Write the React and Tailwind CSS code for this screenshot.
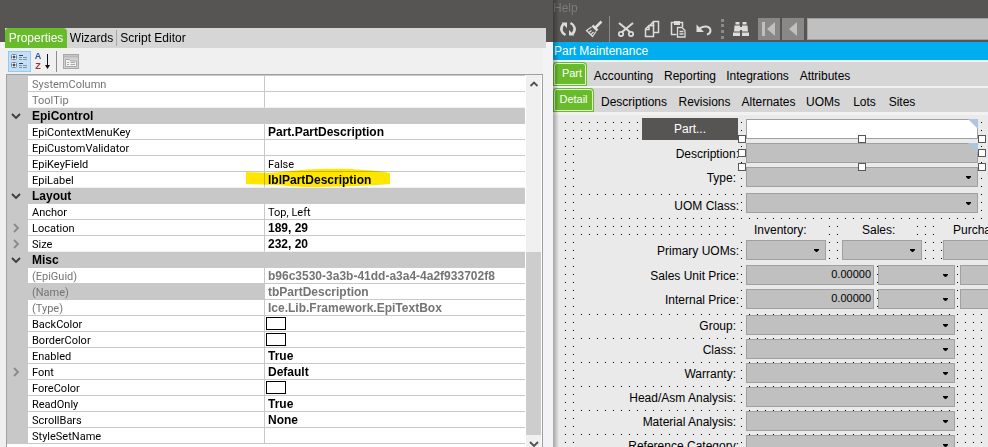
import React from "react";

const PROPERTY_ROWS = [
  { name: "SystemColumn", value: "", muted: true },
  { name: "ToolTip", value: "", muted: true },
  { category: "EpiControl" },
  { name: "EpiContextMenuKey", value: "Part.PartDescription", bold: true },
  { name: "EpiCustomValidator", value: "" },
  { name: "EpiKeyField", value: "False" },
  { name: "EpiLabel", value: "lblPartDescription", bold: true, marked: true },
  { category: "Layout" },
  { name: "Anchor", value: "Top, Left" },
  { name: "Location", value: "189, 29", bold: true, expandable: true },
  { name: "Size", value: "232, 20", bold: true, expandable: true },
  { category: "Misc" },
  { name: "(EpiGuid)", value: "b96c3530-3a3b-41dd-a3a4-4a2f933702f8", bold: true, muted: true },
  { name: "(Name)", value: "tbPartDescription", bold: true, muted: true, selected: true },
  { name: "(Type)", value: "Ice.Lib.Framework.EpiTextBox", bold: true, muted: true },
  { name: "BackColor", swatch: true },
  { name: "BorderColor", swatch: true },
  { name: "Enabled", value: "True", bold: true },
  { name: "Font", value: "Default", bold: true, expandable: true },
  { name: "ForeColor", swatch: true },
  { name: "ReadOnly", value: "True", bold: true },
  { name: "ScrollBars", value: "None", bold: true },
  { name: "StyleSetName", value: "" },
];

function Chevron({ className, d }) {
  return (
    <svg className={className} width="10" height="10" viewBox="0 0 10 10" fill="none" stroke="currentColor" strokeWidth="1.800">
      <path d={d} />
    </svg>
  );
}

const DOWN = "M1 3l4 4 4-4";
const RIGHT = "M3 1l4 4-4 4";
const UP = "M1.500 7L5 3.500 8.500 7";

function PropertyRow({ row, beforeCategory }) {
  if (row.category) {
    return (
      <tr className="h-4 bg-[#c8c8c8]">
        <td className="p-0">
          <Chevron className="ml-1 text-[#3c3c3c]" d={DOWN} />
        </td>
        <th colSpan={2} scope="colgroup" className="p-0 pl-1 text-left text-xs leading-4 font-bold font-['Liberation_Sans',sans-serif]">
          {row.category}
        </th>
      </tr>
    );
  }
  const line = beforeCategory ? "border-b border-[#f0f0f0]" : "border-b border-[#c8c8c8]";
  const tone = row.muted ? "text-[#747474]" : "text-black";
  const valueFont = row.bold ? "text-xs leading-[13px] font-bold font-['Liberation_Sans',sans-serif]" : "leading-[13px]";
  return (
    <tr className="h-4">
      <td className="bg-[#c8c8c8] p-0">
        {row.expandable && <Chevron className="ml-1 text-[#8a8a8a]" d={RIGHT} />}
      </td>
      <th scope="row" className={`${line} ${tone} ${row.selected ? "bg-[#c8c8c8]" : "bg-white"} p-0 pt-0.5 pl-1 text-left font-normal leading-[13px]`}>
        {row.name}
      </th>
      <td className={`${line} ${tone} relative border-l border-l-[#c8c8c8] p-0`}>
        {row.marked && (
          <svg className="absolute -top-1 -left-5 mix-blend-multiply" width="146" height="20" viewBox="0 0 146 20" fill="#ffe600">
            <path d="M1 4L24 5C40 4 58 1 76 1C100 0 128 2 145 5V16C122 18 90 19 64 19C50 19 44 18 32 17L1 16Z" />
          </svg>
        )}
        {row.swatch ? (
          <span className="ml-px block h-[13px] w-5 border border-black bg-white" />
        ) : (
          <span className={`relative block h-[15px] pt-0.5 pl-[3px] whitespace-nowrap ${valueFont}`}>{row.value}</span>
        )}
      </td>
    </tr>
  );
}

function PropertiesPanel() {
  return (
    <section className="flex w-[553px] shrink-0 flex-col bg-[#f3f3f6]">
      <div className="h-7 bg-[#575553]" />
      <div className="flex bg-[linear-gradient(#575553_14px,#f3f3f6_0)] pr-[7px] pl-[5px]">
        <nav className="flex h-5 flex-1 bg-[#d6d6d6] text-xs">
          <button className="w-[62px] rounded-t-sm bg-[#68bb2a] text-white">Properties</button>
          <button className="my-0.5 w-[50px] border-r border-[#a8a8a0]">Wizards</button>
          <button className="w-[72px]">Script Editor</button>
        </nav>
      </div>
      <div className="mr-2.5 flex h-[26px] items-center bg-[#f0f0f0] pl-2">
        <button aria-label="Categorized" className="flex h-[21px] w-[23px] items-center justify-center border border-[#90c8f6] bg-[#c5dff5]">
          <svg width="17" height="16" viewBox="0 0 17 16" fill="none">
            <rect x="0.5" y="1.5" width="5" height="5" rx="1" fill="#fff" stroke="#6f86a5" />
            <rect x="0.5" y="9.5" width="5" height="5" rx="1" fill="#fff" stroke="#6f86a5" />
            <path d="M1.500 4h3M3 2.500v3M1.500 12h3M3 10.500v3" stroke="#111" />
            <path d="M8 2.500h4M8 10.500h4" stroke="#333f55" />
            <path d="M8 4.500h3M12 4.500h4M8 6.500h3M12 6.500h4M8 12.500h3M12 12.500h4M8 14.500h3M12 14.500h4" stroke="#7d93ae" />
          </svg>
        </button>
        <button aria-label="Alphabetical" className="ml-[3px] flex h-[21px] w-[18px] items-center">
          <span className="flex w-2 flex-col font-['Liberation_Sans',sans-serif] text-[9px] leading-[10px] font-bold">
            <span className="text-[#2b579a]">A</span>
            <span className="text-[#a13237]">Z</span>
          </span>
          <svg className="ml-0.5" width="7" height="17" viewBox="0 0 7 17" fill="#111">
            <path d="M3 1h1v11h2L3.500 16 1 12h2z" />
          </svg>
        </button>
        <span className="ml-1 h-[21px] w-px bg-[#8c8c8c]" />
        <button aria-label="Property pages" className="ml-1.5">
          <svg width="16" height="15" viewBox="0 0 16 15" fill="none" stroke="#a8a8a8">
            <rect x="0.5" y="0.5" width="15" height="14" fill="#d2d2d2" />
            <path d="M1 2.500h14" strokeWidth="2" stroke="#b9b9b9" />
            <path d="M2.500 12.500v-7h4l1 1.500h6v5.500z" fill="#f4f4f4" />
            <path d="M4 8.500h2M7.500 8.500h4.500M4 10.500h2M7.500 10.500h4.500" />
          </svg>
        </button>
      </div>
      <div className="mr-2.5 flex min-h-0 flex-1 bg-[#f0f0f0] pl-1.5">
        <div className="flex min-w-0 flex-1 overflow-hidden border-t border-r border-l border-[#a0a0a0] bg-white">
          <div className="min-w-0 flex-1">
            <table className="w-full table-fixed border-separate border-spacing-0 border-t border-[#c8c8c8] font-['Roboto',sans-serif] text-[11px]">
              <colgroup>
                <col className="w-[21px]" />
                <col className="w-[236px]" />
                <col />
              </colgroup>
              <tbody>
                {PROPERTY_ROWS.map((row, i) => (
                  <PropertyRow
                    key={row.category || row.name}
                    row={row}
                    beforeCategory={Boolean(PROPERTY_ROWS[i + 1]?.category)}
                  />
                ))}
              </tbody>
            </table>
          </div>
          <div className="ml-px mr-px flex w-[15px] flex-col items-center bg-[#f0f0f0] text-[#505050]">
            <Chevron className="my-1" d={UP} />
            <div className="mt-[159px] w-full flex-1 bg-[#cdcdcd]" />
            <Chevron className="mt-1 -mb-0.5" d={DOWN} />
          </div>
        </div>
      </div>
    </section>
  );
}

function ToolButton({ label, children }) {
  return (
    <button aria-label={label} className="flex h-6 w-[26px] shrink-0 items-center justify-center text-[#dcdcdc]">
      <svg width="18" height="18" viewBox="0 0 18 18" fill="none" stroke="currentColor" strokeWidth="1.500">
        {children}
      </svg>
    </button>
  );
}

function AppToolbar() {
  return (
    <header className="h-[42px] overflow-hidden bg-[#575553]">
      <button className="block h-4 text-xs leading-[13px] text-[#7b7b7b]">Help</button>
      <div className="flex h-[26px] items-center pl-0.5">
        <ToolButton label="Refresh">
          <path d="M6.500 15C2.500 13 .5 8.500 4.500 4M11.500 3C15.500 5 17.500 9.500 13.500 14" strokeWidth="2.500" />
          <path d="M2.500 2.500H8V8zM15.500 15.500H10V10z" fill="currentColor" stroke="none" />
        </ToolButton>
        <ToolButton label="Clear">
          <path d="M16.500 1.500L10.500 7.500" strokeWidth="2.500" />
          <path d="M7.500 5.500l5 5" strokeWidth="2.500" />
          <path d="M6.500 7L1.500 10.500l6 6L11 11.500M4 12.500l2.500-2M6 14.500l2.500-2.500" strokeWidth="1.300" />
        </ToolButton>
        <span className="ml-0.5 mr-[3px] h-[26px] w-px shrink-0 bg-[#8a8a8a]" />
        <ToolButton label="Cut">
          <path d="M2 3l11 9M16 3L5 12" strokeWidth="2" />
          <circle cx="4" cy="14" r="2.200" strokeWidth="1.700" />
          <circle cx="14" cy="14" r="2.200" strokeWidth="1.700" />
        </ToolButton>
        <ToolButton label="Copy">
          <path d="M7 5.500L10.500 1.500H15.500V12.500H11M10.500 1.500V5.500H7" />
          <path d="M2.500 9L6 5.500H10.500V16.500H2.500zM6 5.500V9.500H2.500" />
        </ToolButton>
        <ToolButton label="Paste">
          <path d="M7.500 14.500H2.500v-12h11V7" />
          <path d="M5 1h6v4H5z" fill="currentColor" stroke="none" />
          <path d="M8.500 7.500H13l3 3v6.500H8.500zM10.500 11.500h4M10.500 14h4" strokeWidth="1.300" />
        </ToolButton>
        <ToolButton label="Undo">
          <path d="M4 9C8 5.500 15 5.500 15.500 10.500C15.500 12.500 14 14 12 14.500" strokeWidth="2" />
          <path d="M1.500 4.500v7.500h7.500z" fill="currentColor" stroke="none" />
        </ToolButton>
        <span className="ml-1 mr-1 h-5 shrink-0 border-l-3 border-dotted border-[#8a8a8a]" />
        <ToolButton label="Search">
          <g fill="currentColor" stroke="none">
            <path d="M3.500 2h4v2.500h-4zM10.500 2h4v2.500h-4zM2.500 5.500h5.500v6H2zM10 5.500h5.500l.5 6h-6zM8 7h2v3H8zM1 12.500h7V16H1zM10 12.500h7V16h-7z" />
          </g>
        </ToolButton>
        <button aria-label="First record" className="ml-1 flex h-[22px] w-[22px] shrink-0 items-center justify-center bg-[#8a8787]">
          <svg width="14" height="14" viewBox="0 0 14 14" fill="#c0bfbf">
            <path d="M0 0h3v14H0zM13 0v14L5 7z" />
          </svg>
        </button>
        <button aria-label="Previous record" className="ml-0.5 flex h-[22px] w-[22px] shrink-0 items-center justify-center bg-[#8a8787]">
          <svg width="8" height="14" viewBox="0 0 8 14" fill="#c0bfbf">
            <path d="M8 0v14L0 7z" />
          </svg>
        </button>
        <input aria-label="Record" className="ml-[3px] h-[22px] min-w-0 flex-1 border border-r-0 border-[#a0a0a0] bg-[#c0c0c0]" />
      </div>
    </header>
  );
}

const ACTIVE_TAB = "h-6 rounded-t-sm bg-[#68bb2a] pb-0.5 text-[11px] text-white outline outline-1 -outline-offset-2 outline-[#e4f3d8]";

function Tabs() {
  return (
    <div className="bg-[#f2f2f2] pt-0.5 text-xs">
      <nav className="flex h-6 overflow-hidden bg-[#d6d6d6]">
        <button className={`${ACTIVE_TAB} w-[34px] pl-1`}>Part</button>
        <button className="ml-1 w-[65px] pt-1">Accounting</button>
        <button className="w-[68px] pt-1">Reporting</button>
        <button className="w-[67px] pt-1">Integrations</button>
        <button className="w-[68px] pt-1">Attributes</button>
      </nav>
      <nav className="mt-0.5 flex h-6 overflow-hidden bg-[#d6d6d6]">
        <button className={`${ACTIVE_TAB} w-[41px]`}>Detail</button>
        <button className="ml-0.5 w-[76px] pt-1">Descriptions</button>
        <button className="w-[65px] pt-1">Revisions</button>
        <button className="w-[63px] pt-1">Alternates</button>
        <button className="w-[46px] pt-1">UOMs</button>
        <button className="w-[37px] pt-1">Lots</button>
        <button className="w-[38px] pt-1">Sites</button>
      </nav>
    </div>
  );
}

function Combo({ id, label, className }) {
  return (
    <span className={`relative block h-5 shrink-0 ${className}`}>
      <select id={id} aria-label={label} className="block size-full appearance-none border border-[#a0a0a0] bg-[#c0c0c0]" />
      <svg className="pointer-events-none absolute top-2 right-[7px]" width="5" height="5" viewBox="0 0 5 5">
        <path d="M0 1h5v1L3 4H2L0 2z" />
      </svg>
    </span>
  );
}

const BOX = "block h-5 border border-[#a0a0a0] outline-none";

function Field({ label, id, className, labelClass, children }) {
  return (
    <div className={`flex pl-2.5 ${className}`}>
      <label htmlFor={id} className={`mr-[7px] w-[164px] shrink-0 bg-[#eaeaea] text-right whitespace-nowrap ${labelClass || "h-5 leading-[22px]"}`}>
        {label}
      </label>
      {children}
    </div>
  );
}

function FilterCorner() {
  return (
    <svg className="absolute top-0 right-0" width="10" height="10" viewBox="0 0 10 10" fill="#b0c4de">
      <path d="M0 0h10v10z" />
    </svg>
  );
}

const HANDLES = [
  "-top-2 -left-2",
  "top-1.5 -left-2",
  "-bottom-2 -left-2",
  "-top-2 left-28",
  "-bottom-2 left-28",
  "-top-2 -right-2",
  "top-1.5 -right-2",
  "-bottom-2 -right-2",
];

const DETAIL_COMBOS = [
  ["Group:", "pr-[3px]"],
  ["Class:", "pr-[3px]"],
  ["Warranty:", "pr-[3px]"],
  ["Head/Asm Analysis:", "pr-[3px]"],
  ["Material Analysis:", "pr-[3px]"],
  ["Reference Category:", ""],
];

function PriceRow({ label, id, className }) {
  return (
    <Field label={label} id={id} className={className}>
      <input id={id} defaultValue="0.00000" className={`${BOX} w-32 shrink-0 bg-[#c0c0c0] pr-0.5 pb-0.5 text-right text-[11px]`} />
      <Combo label={`${label} currency`} className="ml-1 w-[77px]" />
      <Combo label={`${label} unit`} className="ml-[5px] w-20" />
    </Field>
  );
}

function DesignSurface() {
  return (
    <div className="min-h-0 flex-1 overflow-hidden border-t-3 border-[#f2f2f2] bg-[#eaeaea] pl-3">
      <form className="h-full bg-[conic-gradient(from_270deg_at_1px_1px,#000_90deg,transparent_0)] bg-[size:8px_8px] bg-[position:0_7px] pt-[3px]">
        <div className="flex pl-[77px]">
          <button type="button" className="h-[22px] w-24 shrink-0 bg-[#575553] text-white">Part...</button>
          <span className="relative mt-px ml-2 block w-58 shrink-0">
            <input aria-label="Part number" className={`${BOX} w-full bg-white`} />
            <FilterCorner />
          </span>
        </div>
        <Field label="Description:" id="description" className="mt-[3px]">
          <span className="relative block w-58 shrink-0">
            <input id="description" readOnly className={`${BOX} w-full bg-[#c0c0c0]`} />
            <FilterCorner />
            {HANDLES.map((place) => (
              <span key={place} className={`absolute z-10 size-2 border border-[#575757] bg-white ${place}`} />
            ))}
          </span>
        </Field>
        <Field label="Type:" id="type" className="mt-1" labelClass="h-5 leading-[22px] pr-[3px]">
          <Combo id="type" className="w-58" />
        </Field>
        <Field label="UOM Class:" id="uom-class" className="mt-1.5" labelClass="h-4 self-end leading-[18px]">
          <Combo id="uom-class" className="w-58" />
        </Field>
        <div className="mt-[9px] flex h-4 pl-[174px] leading-4 whitespace-nowrap">
          <span className="w-[86px] shrink-0 bg-[#eaeaea] pl-[15px]">Inventory:</span>
          <span className="ml-[15px] w-[73px] shrink-0 bg-[#eaeaea] pl-[22px]">Sales:</span>
          <span className="ml-[22px] w-20 shrink-0 bg-[#eaeaea] pl-[18px]">Purchasing:</span>
        </div>
        <Field label="Primary UOMs:" id="uom-inventory" className="mt-0.5">
          <Combo id="uom-inventory" className="w-20" />
          <Combo label="Sales UOM" className="ml-4 w-20" />
          <Combo label="Purchasing UOM" className="ml-[21px] w-20" />
        </Field>
        <PriceRow label="Sales Unit Price:" id="sales-price" className="mt-[5px]" />
        <PriceRow label="Internal Price:" id="internal-price" className="mt-1" />
        <div className="mt-1.5 flex flex-col gap-1">
          {DETAIL_COMBOS.map(([label, pad]) => (
            <Field key={label} label={label} id={label} labelClass={`h-5 leading-[22px] ${pad}`} className="">
              <Combo id={label} className="w-[209px]" />
            </Field>
          ))}
        </div>
      </form>
    </div>
  );
}

export default function App() {
  return (
    <main className="flex h-screen overflow-hidden bg-[#eaeaea] font-['Liberation_Sans',Arial,sans-serif] text-xs text-black">
      <PropertiesPanel />
      <section className="relative flex min-w-0 flex-1 flex-col overflow-hidden">
        <AppToolbar />
        <h1 className="h-[18px] bg-[#00adef] pl-px leading-[18px] text-white">Part Maintenance</h1>
        <Tabs />
        <DesignSurface />
        <div className="pointer-events-none absolute inset-y-0 left-0 w-1.5 bg-linear-to-r from-black/30 to-transparent" />
      </section>
    </main>
  );
}
